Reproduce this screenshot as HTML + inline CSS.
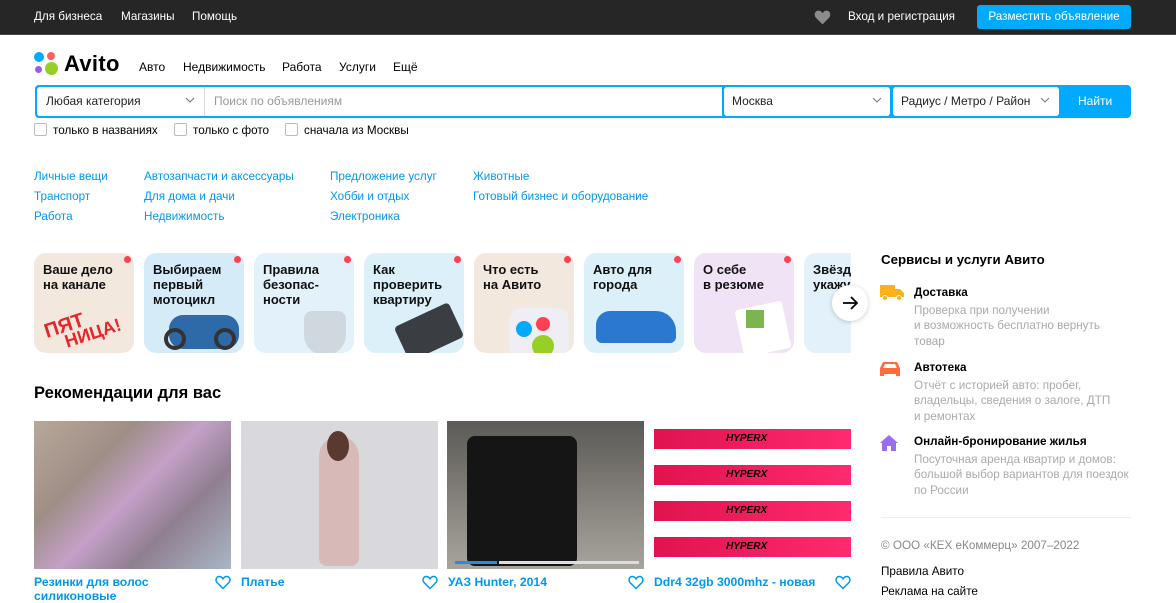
<!DOCTYPE html>
<html><head><meta charset="utf-8">
<style>
*{margin:0;padding:0;box-sizing:border-box}
body{width:1176px;height:597px;overflow:hidden;background:#fff;font-family:"Liberation Sans",Arial,sans-serif;font-size:12px;color:#000;position:relative}
.a{position:absolute;white-space:nowrap}
.top{position:absolute;left:0;top:0;width:1176px;height:35px;background:#262626;border-bottom:1px solid #444}
.top span{color:#fff;font-size:11.7px}
.btn{background:#00aaff;color:#fff;border-radius:3px}
.lnk{color:#0099ee;font-size:11.7px}
.card{position:absolute;top:253px;width:100px;height:100px;border-radius:12px;overflow:hidden}
.card b{position:absolute;left:9px;top:9px;font-size:13px;line-height:15px;color:#111;white-space:normal;font-weight:700}
.dot{position:absolute;right:3px;top:3px;width:7px;height:7px;border-radius:50%;background:#ff4053}
.img{position:absolute;top:421px;height:148px;width:197px}
.t{position:absolute;top:575px;color:#0099ee;font-weight:bold;font-size:12.2px}
.sv{position:absolute;left:914px;font-size:11.7px;line-height:15.5px;color:#aaa;white-space:nowrap}
.sv b{color:#000;display:block;margin-bottom:2px}
.cb{display:inline-block;width:13px;height:13px;border:1px solid #bbb;border-radius:2px;vertical-align:-2px;margin-right:6px}
</style></head><body>
<div class="top">
<span class="a" style="left:34px;top:10px">Для бизнеса</span>
<span class="a" style="left:121px;top:10px">Магазины</span>
<span class="a" style="left:192px;top:10px">Помощь</span>
<svg class="a" style="left:814px;top:10px" width="17" height="15" viewBox="0 0 24 22"><path d="M12 21 2 11C-1 7 1 1 6 1c3 0 5 2 6 4 1-2 3-4 6-4 5 0 7 6 4 10z" fill="#8c8c8c"/></svg>
<span class="a" style="left:848px;top:10px">Вход и регистрация</span>
<div class="a btn" style="left:977px;top:5px;width:154px;height:24px;font-size:11.7px;text-align:center;line-height:24px">Разместить объявление</div>
</div>
<!-- logo -->
<div class="a" style="left:34px;top:52px;width:10px;height:10px;border-radius:50%;background:#0af"></div>
<div class="a" style="left:47px;top:52px;width:8px;height:8px;border-radius:50%;background:#ff6163"></div>
<div class="a" style="left:35px;top:66px;width:7px;height:7px;border-radius:50%;background:#965eeb"></div>
<div class="a" style="left:45px;top:62px;width:13px;height:13px;border-radius:50%;background:#97cf26"></div>
<span class="a" style="left:64px;top:51px;font-size:22px;font-weight:bold;letter-spacing:0.3px">Avito</span>
<span class="a" style="left:139px;top:60px">Авто</span>
<span class="a" style="left:183px;top:60px">Недвижимость</span>
<span class="a" style="left:282px;top:60px">Работа</span>
<span class="a" style="left:339px;top:60px">Услуги</span>
<span class="a" style="left:393px;top:60px">Ещё</span>
<!-- search -->
<div class="a" style="left:35px;top:85px;width:1096px;height:33px;background:#00aaff;border-radius:4px"></div>
<div class="a" style="left:37px;top:87px;width:685px;height:29px;background:#fff;border-radius:3px 0 0 3px"></div>
<div class="a" style="left:204px;top:87px;width:1px;height:29px;background:#ddd"></div>
<span class="a" style="left:46px;top:94px;color:#222">Любая категория</span>
<span class="a" style="left:214px;top:94px;color:#999">Поиск по объявлениям</span>
<div class="a" style="left:724px;top:87px;width:166px;height:29px;background:#fff;border-radius:3px"></div>
<span class="a" style="left:732px;top:94px;color:#222">Москва</span>
<div class="a" style="left:893px;top:87px;width:166px;height:29px;background:#fff;border-radius:3px"></div>
<span class="a" style="left:901px;top:94px;color:#222">Радиус / Метро / Район</span>
<span class="a" style="left:1078px;top:94px;color:#fff">Найти</span>
<svg class="a" style="left:185px;top:97px" width="10" height="7"><path d="M1 1l4 4 4-4" stroke="#777" fill="none"/></svg>
<svg class="a" style="left:872px;top:97px" width="10" height="7"><path d="M1 1l4 4 4-4" stroke="#777" fill="none"/></svg>
<svg class="a" style="left:1040px;top:97px" width="10" height="7"><path d="M1 1l4 4 4-4" stroke="#777" fill="none"/></svg>
<span class="a" style="left:34px;top:123px;font-size:11.7px"><i class="cb"></i>только в названиях</span>
<span class="a" style="left:174px;top:123px;font-size:11.7px"><i class="cb"></i>только с фото</span>
<span class="a" style="left:285px;top:123px;font-size:11.7px"><i class="cb"></i>сначала из Москвы</span>
<!-- category links -->
<span class="a lnk" style="left:34px;top:170px">Личные вещи</span>
<span class="a lnk" style="left:34px;top:190px">Транспорт</span>
<span class="a lnk" style="left:34px;top:210px">Работа</span>
<span class="a lnk" style="left:144px;top:170px">Автозапчасти и аксессуары</span>
<span class="a lnk" style="left:144px;top:190px">Для дома и дачи</span>
<span class="a lnk" style="left:144px;top:210px">Недвижимость</span>
<span class="a lnk" style="left:330px;top:170px">Предложение услуг</span>
<span class="a lnk" style="left:330px;top:190px">Хобби и отдых</span>
<span class="a lnk" style="left:330px;top:210px">Электроника</span>
<span class="a lnk" style="left:473px;top:170px">Животные</span>
<span class="a lnk" style="left:473px;top:190px">Готовый бизнес и оборудование</span>
<!-- cards -->
<div class="card" style="left:34px;background:#f3e8de"><b>Ваше дело<br>на канале</b><div class="a" style="left:10px;top:62px;color:#e8262b;font-weight:900;font-size:20px;transform:rotate(-18deg)">ПЯТ<br></div><div class="a" style="left:30px;top:70px;color:#e8262b;font-weight:900;font-size:18px;transform:rotate(-18deg)">НИЦА!</div><div class="dot"></div></div>
<div class="card" style="left:144px;background:#d6ebf8"><b>Выбираем<br>первый<br>мотоцикл</b><div class="a" style="left:25px;top:62px;width:70px;height:34px;background:#2e6aa8;border-radius:14px"></div><div class="a" style="left:20px;top:75px;width:22px;height:22px;border:4px solid #333;border-radius:50%"></div><div class="a" style="left:70px;top:75px;width:22px;height:22px;border:4px solid #333;border-radius:50%"></div><div class="dot"></div></div>
<div class="card" style="left:254px;background:#e2f1fa"><b>Правила<br>безопас-<br>ности</b><div class="a" style="left:50px;top:58px;width:42px;height:44px;background:#cfd8df;border-radius:8px 8px 20px 20px"></div><div class="dot"></div></div>
<div class="card" style="left:364px;background:#dcf0fa"><b>Как<br>проверить<br>квартиру</b><div class="a" style="left:35px;top:60px;width:60px;height:38px;background:#3a3d42;transform:rotate(-25deg);border-radius:4px"></div><div class="dot"></div></div>
<div class="card" style="left:474px;background:#f3e8de"><b>Что есть<br>на Авито</b><div class="a" style="left:35px;top:55px;width:60px;height:50px;background:#eeeef4;border-radius:12px"></div><div class="a" style="left:42px;top:68px;width:16px;height:16px;border-radius:50%;background:#0af"></div><div class="a" style="left:62px;top:64px;width:14px;height:14px;border-radius:50%;background:#ff4053"></div><div class="a" style="left:58px;top:82px;width:22px;height:22px;border-radius:50%;background:#97cf26"></div><div class="dot"></div></div>
<div class="card" style="left:584px;background:#dcf0fa"><b>Авто для<br>города</b><div class="a" style="left:12px;top:58px;width:80px;height:32px;background:#2a78d0;border-radius:14px 20px 6px 6px"></div><div class="dot"></div></div>
<div class="card" style="left:694px;background:#efe3f5"><b>О себе<br>в резюме</b><div class="a" style="left:45px;top:52px;width:48px;height:48px;background:#fff;transform:rotate(-12deg);border-radius:3px"></div><div class="a" style="left:52px;top:57px;width:18px;height:18px;background:#7ab550"></div><div class="dot"></div></div>
<div class="card" style="left:804px;width:50px;border-radius:12px 0 0 12px;background:#e2f1fa"><b>Звёзд<br>укажу</b></div>
<div class="a" style="left:851px;top:240px;width:25px;height:130px;background:#fff"></div>
<div class="a" style="left:832px;top:285px;width:36px;height:36px;border-radius:50%;background:#fff;box-shadow:0 1px 5px rgba(0,0,0,.2)"></div>
<svg class="a" style="left:841px;top:294px" width="18" height="18"><path d="M2 9h14M10 3l6 6-6 6" stroke="#000" stroke-width="1.8" fill="none"/></svg>
<!-- recommendations -->
<span class="a" style="left:34px;top:384px;font-size:16.5px;font-weight:bold">Рекомендации для вас</span>
<div class="img" style="left:34px;background:linear-gradient(135deg,#b8a89a,#9e8e86 30%,#c4a0c8 50%,#8f7f90 70%,#a9b6c4)"></div>
<div class="img" style="left:241px;background:#d9d9dd"><div class="a" style="left:78px;top:15px;width:40px;height:130px;background:#d7b9b7;border-radius:20px 20px 8px 8px"></div><div class="a" style="left:86px;top:10px;width:22px;height:30px;background:#5a3a30;border-radius:50%"></div></div>
<div class="img" style="left:447px;background:linear-gradient(#5c5a56,#8a8680 60%,#a7a39d)"><div class="a" style="left:20px;top:15px;width:110px;height:130px;background:#151515;border-radius:8px"></div><div class="a" style="left:8px;top:140px;width:42px;height:3px;background:#2b8be0"></div><div class="a" style="left:52px;top:140px;width:140px;height:3px;background:#ddd"></div></div>
<div class="img" style="left:654px;background:#fff">
<div class="a" style="left:0;top:8px;width:197px;height:20px;background:linear-gradient(90deg,#e0134f,#ff2a6f)"></div><div class="a" style="left:0;top:44px;width:197px;height:20px;background:linear-gradient(90deg,#e0134f,#ff2a6f)"></div><div class="a" style="left:0;top:80px;width:197px;height:20px;background:linear-gradient(90deg,#e0134f,#ff2a6f)"></div><div class="a" style="left:0;top:116px;width:197px;height:20px;background:linear-gradient(90deg,#e0134f,#ff2a6f)"></div>
<span class="a" style="left:72px;top:12px;font-size:10px;font-style:italic;font-weight:bold">HYPERX</span><span class="a" style="left:72px;top:48px;font-size:10px;font-style:italic;font-weight:bold">HYPERX</span><span class="a" style="left:72px;top:84px;font-size:10px;font-style:italic;font-weight:bold">HYPERX</span><span class="a" style="left:72px;top:120px;font-size:10px;font-style:italic;font-weight:bold">HYPERX</span></div>
<span class="t" style="left:34px">Резинки для волос<br>силиконовые</span>
<span class="t" style="left:241px">Платье</span>
<span class="t" style="left:448px">УАЗ Hunter, 2014</span>
<span class="t" style="left:654px">Ddr4 32gb 3000mhz - новая</span>
<svg class="a" style="left:215px;top:575px" width="16" height="15" viewBox="0 0 24 22"><path d="M12 20 3 11C0 7 2 2 6.5 2c2.7 0 4.300 1.7 5.5 3.6C13.2 3.7 14.8 2 17.5 2 22 2 24 7 21 11z" stroke="#0099ee" stroke-width="2.2" fill="none"/></svg>
<svg class="a" style="left:422px;top:575px" width="16" height="15" viewBox="0 0 24 22"><path d="M12 20 3 11C0 7 2 2 6.5 2c2.7 0 4.3 1.7 5.5 3.6C13.2 3.7 14.8 2 17.5 2 22 2 24 7 21 11z" stroke="#0099ee" stroke-width="2.2" fill="none"/></svg>
<svg class="a" style="left:628px;top:575px" width="16" height="15" viewBox="0 0 24 22"><path d="M12 20 3 11C0 7 2 2 6.5 2c2.7 0 4.3 1.7 5.5 3.6C13.2 3.7 14.8 2 17.5 2 22 2 24 7 21 11z" stroke="#0099ee" stroke-width="2.2" fill="none"/></svg>
<svg class="a" style="left:835px;top:575px" width="16" height="15" viewBox="0 0 24 22"><path d="M12 20 3 11C0 7 2 2 6.5 2c2.7 0 4.3 1.7 5.5 3.6C13.2 3.7 14.8 2 17.5 2 22 2 24 7 21 11z" stroke="#0099ee" stroke-width="2.2" fill="none"/></svg>
<!-- right -->
<span class="a" style="left:881px;top:252px;font-size:13.3px;font-weight:bold">Сервисы и услуги Авито</span>
<svg class="a" style="left:880px;top:285px" width="24" height="16"><rect x="0" y="0" width="15" height="12" fill="#ffb11b"/><path d="M15 4h5l4 4v4h-9z" fill="#ffb11b"/><circle cx="5" cy="13" r="2.5" fill="#ffb11b" stroke="#fff"/><circle cx="19" cy="13" r="2.5" fill="#ffb11b" stroke="#fff"/></svg>
<div class="sv" style="top:285px"><b>Доставка</b>Проверка при получении<br>и возможность бесплатно вернуть<br>товар</div>
<svg class="a" style="left:880px;top:360px" width="20" height="16"><path d="M3 2h14l3 6v8h-4v-2H4v2H0V8z" fill="#ff6b3d"/><path d="M5 4h10l2 4H3z" fill="#fff"/></svg>
<div class="sv" style="top:360px"><b>Автотека</b>Отчёт с историей авто: пробег,<br>владельцы, сведения о залоге, ДТП<br>и ремонтах</div>
<svg class="a" style="left:880px;top:434px" width="18" height="18"><path d="M9 1 0 9h2v8h5v-5h4v5h5V9h2z" fill="#9c6cf0"/></svg>
<div class="sv" style="top:434px"><b>Онлайн-бронирование жилья</b>Посуточная аренда квартир и домов:<br>большой выбор вариантов для поездок<br>по России</div>
<div class="a" style="left:881px;top:517px;width:250px;height:1px;background:#eee"></div>
<span class="a" style="left:881px;top:539px;color:#888;font-size:11.7px">© ООО «КЕХ еКоммерц» 2007–2022</span>
<span class="a" style="left:881px;top:565px;font-size:11.7px">Правила Авито</span>
<span class="a" style="left:881px;top:585px;font-size:11.7px">Реклама на сайте</span>
</body></html>
